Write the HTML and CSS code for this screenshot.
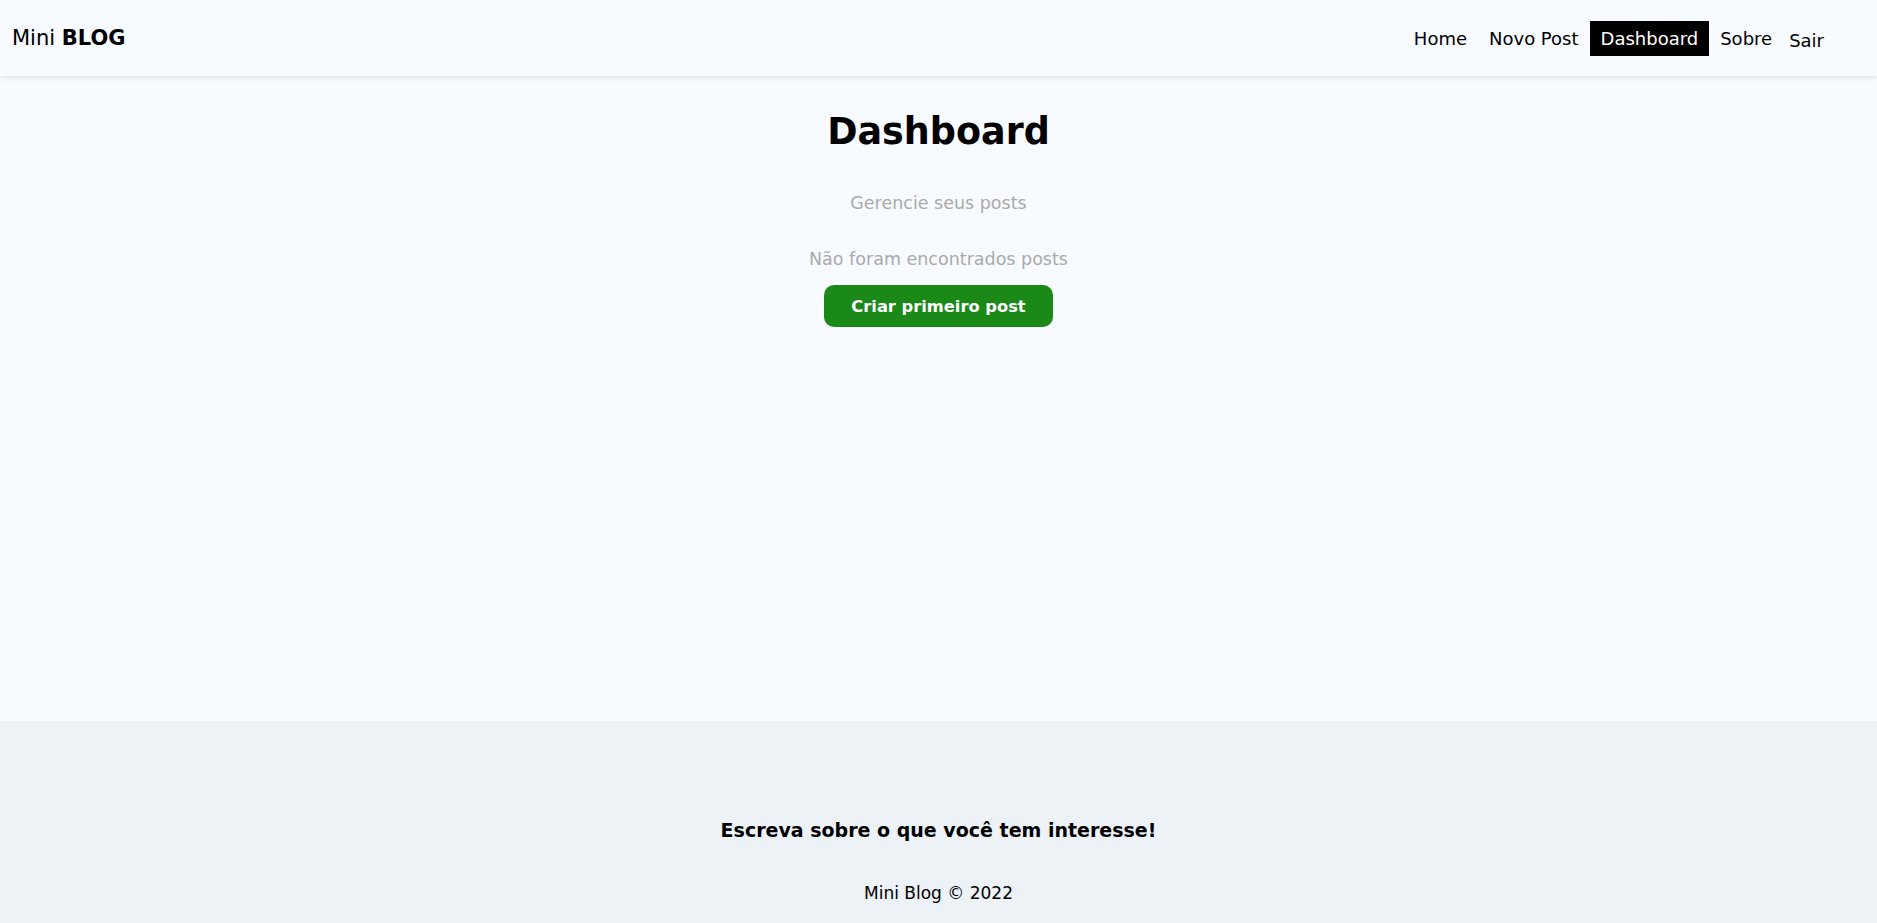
FILE: index.html
```html
<!DOCTYPE html>
<html lang="pt-BR">
<head>
<meta charset="utf-8">
<title>Mini Blog</title>
<link rel="stylesheet" href="styles.css">
</head>
<body>
<nav class="navbar">
  <a class="brand" href="#">Mini <span>BLOG</span></a>
  <ul class="links">
    <li><a href="#">Home</a></li>
    <li><a href="#">Novo Post</a></li>
    <li><a class="active" href="#">Dashboard</a></li>
    <li><a href="#">Sobre</a></li>
    <li><button class="logout">Sair</button></li>
  </ul>
</nav>
<main class="container">
  <h1 class="title">Dashboard</h1>
  <p class="subtitle">Gerencie seus posts</p>
  <div class="noposts">
    <p>Não foram encontrados posts</p>
    <a class="btn" href="#">Criar primeiro post</a>
  </div>
</main>
<footer class="footer">
  <h3>Escreva sobre o que você tem interesse!</h3>
  <p>Mini Blog &copy; 2022</p>
</footer>
</body>
</html>
```
FILE: styles.css
```css
* { box-sizing: border-box; }
body {
  margin: 0;
  font-family: "DejaVu Sans", "Noto Sans", sans-serif;
  background: #f7fbff;
  color: #000;
}
a { text-decoration: none; color: inherit; }

.navbar {
  height: 76px;
  display: flex;
  align-items: center;
  justify-content: space-between;
  padding: 0 45px 0 12px;
  box-shadow: 0 1px 6px rgba(0, 0, 0, 0.12);
  position: relative;
}
.brand { font-size: 21px; color: #000; }
.brand span { font-weight: 800; }
.links {
  list-style: none;
  display: flex;
  align-items: center;
  margin: 0;
  padding: 0;
}
.links a {
  display: block;
  font-size: 18px;
  padding: 7px 11px;
  color: #000;
}
.links a.active { background: #000; color: #fff; }
.logout {
  font-family: inherit;
  font-size: 18px;
  background: none;
  border: none;
  padding: 12px 8px 8px 6px;
  color: #000;
}

.container {
  min-height: 645px;
  display: flex;
  flex-direction: column;
  align-items: center;
  padding-top: 34px;
}
.title { font-size: 36.5px; margin: 0; font-weight: 700; }
.subtitle { color: #aaa; font-size: 17.5px; margin: 40px 0 0; }
.noposts { display: flex; flex-direction: column; align-items: center; }
.noposts p { color: #aaa; font-size: 17.5px; margin: 36px 0 16px; }
.btn {
  background: #1a8918;
  color: #fff;
  font-weight: 700;
  font-size: 16.3px;
  width: 229px;
  height: 42px;
  border-radius: 10px;
  display: flex;
  align-items: center;
  justify-content: center;
}

.footer {
  height: 202px;
  background: #edf2f7;
  display: flex;
  flex-direction: column;
  align-items: center;
  padding-top: 98px;
}
.footer h3 { font-size: 19px; margin: 0 0 42px; }
.footer p { font-size: 17px; margin: 0; }
```
